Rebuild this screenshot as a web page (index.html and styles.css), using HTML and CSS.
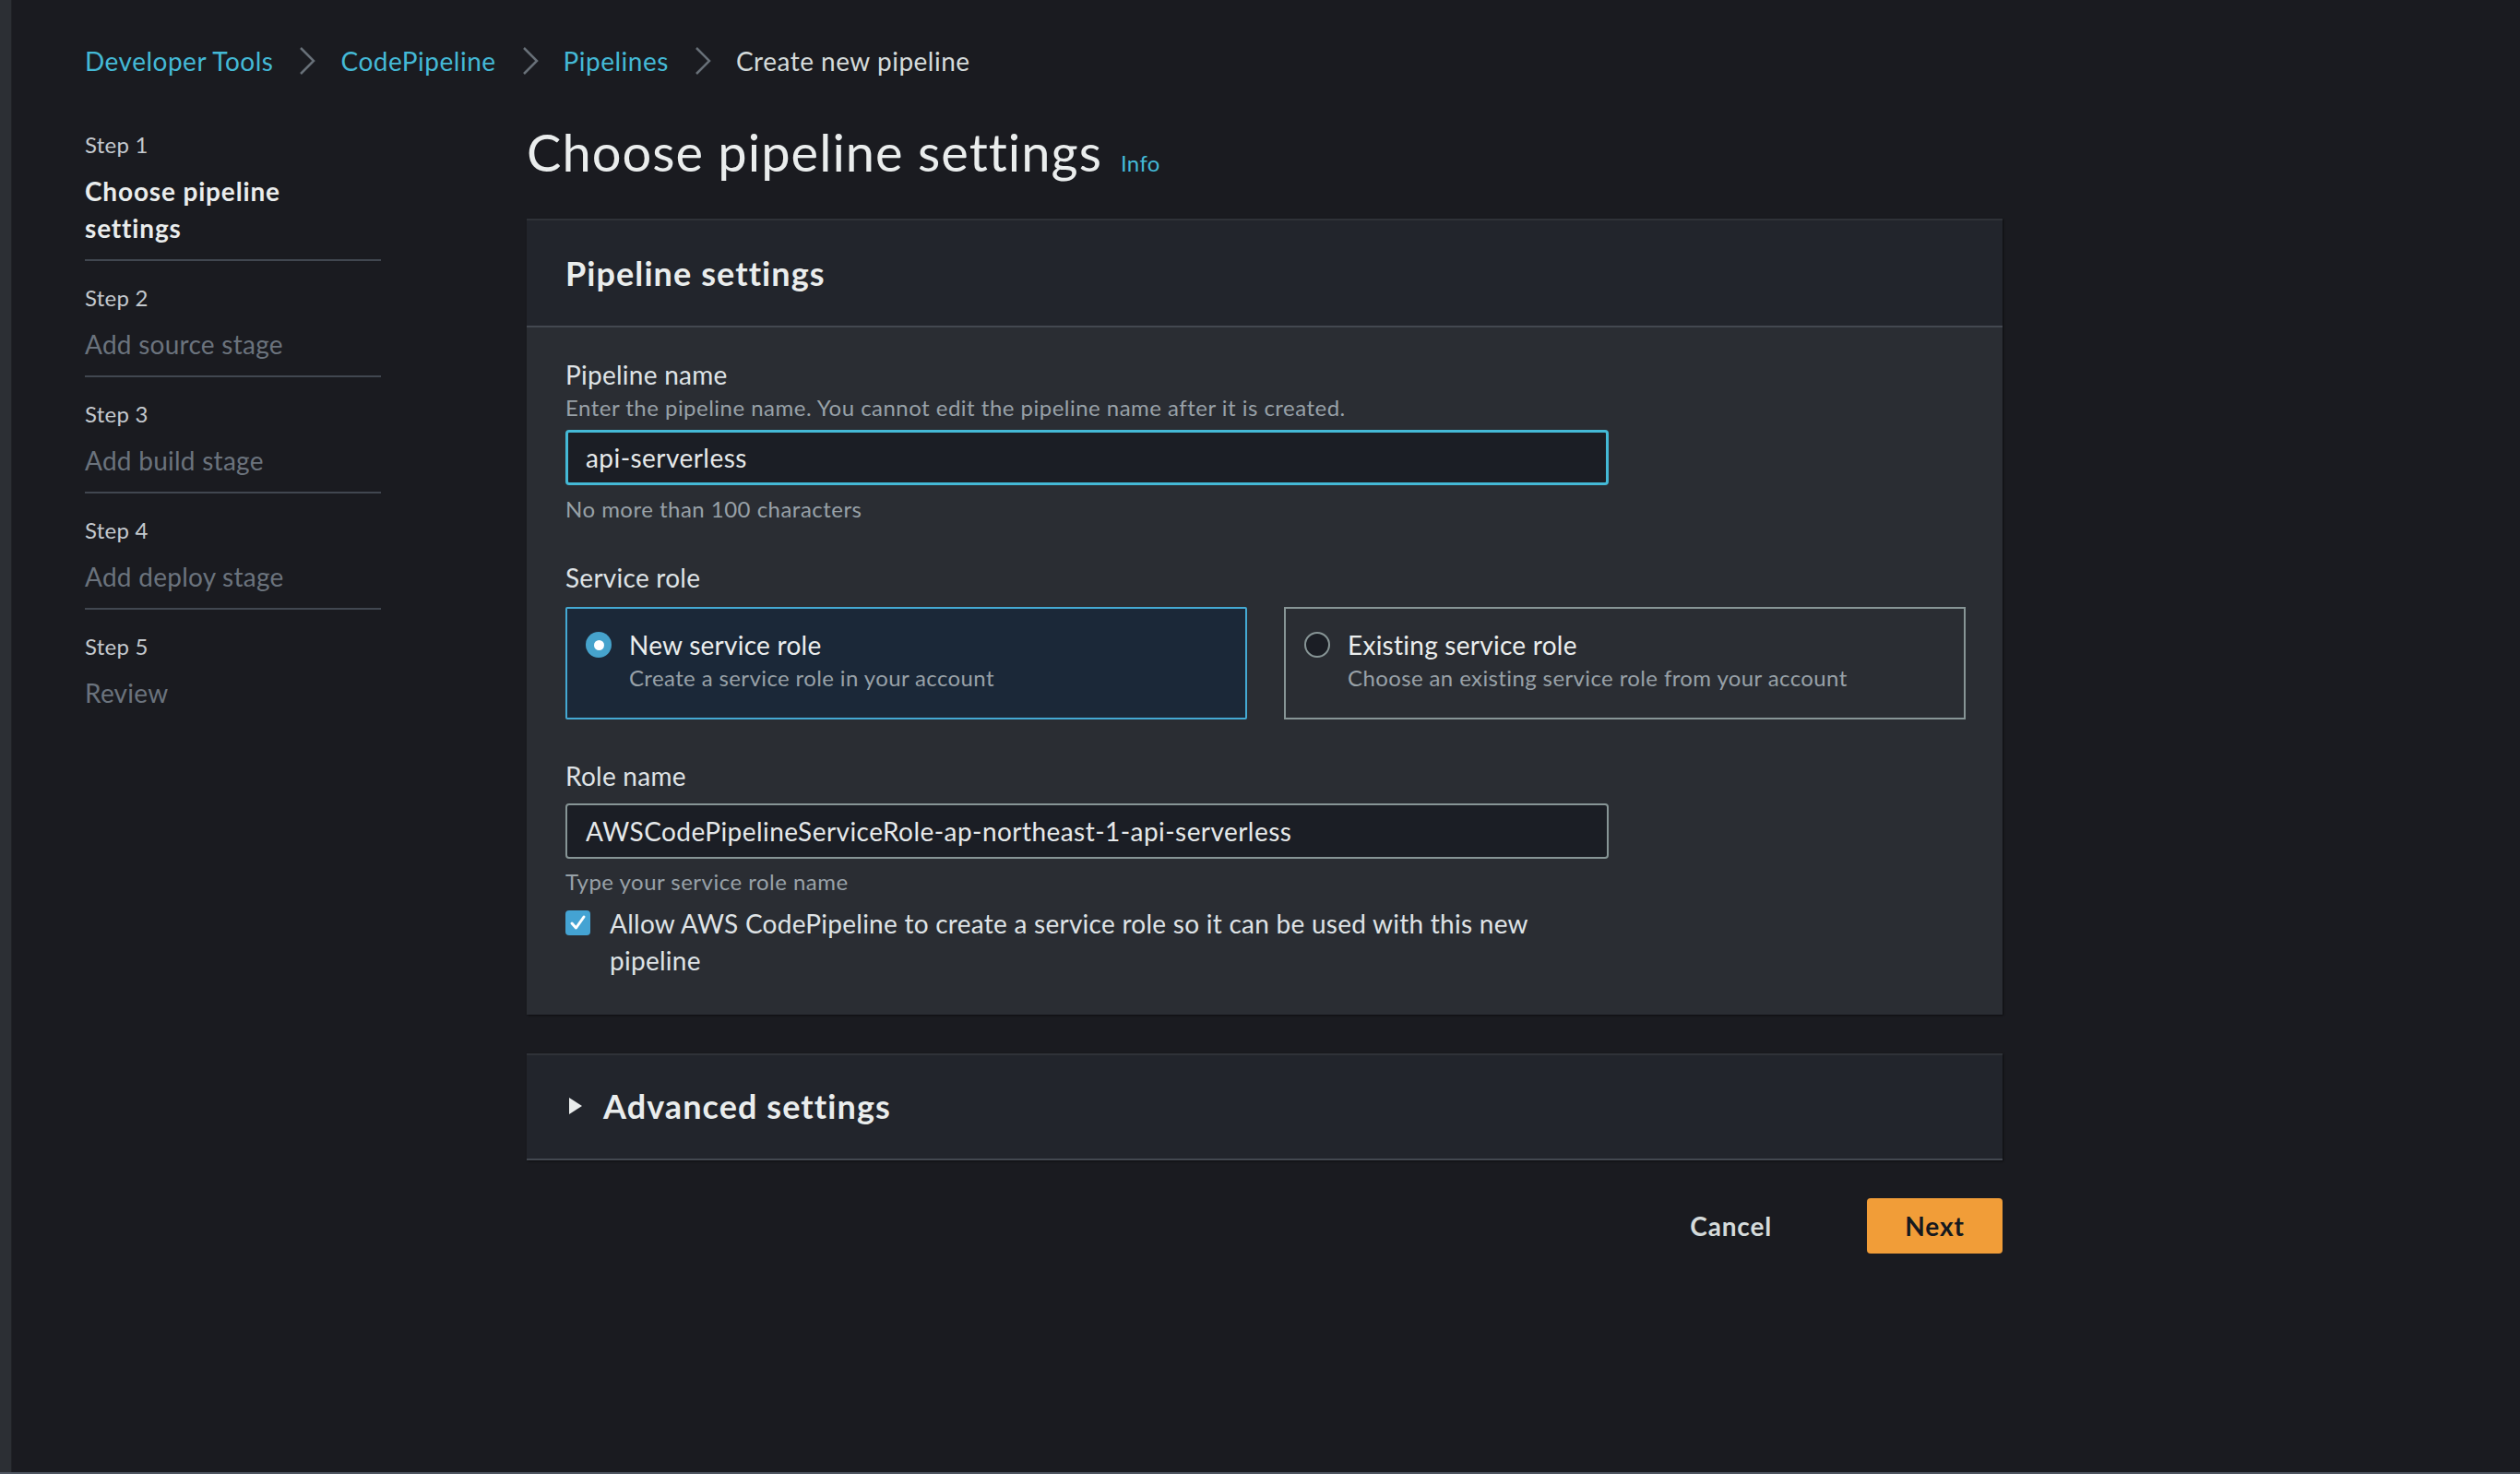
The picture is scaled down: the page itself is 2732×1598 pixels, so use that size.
FILE: index.html
```html
<!DOCTYPE html>
<html lang="en">
<head>
<meta charset="utf-8">
<title>Create new pipeline</title>
<link rel="stylesheet" href="styles.css">
</head>
<body>
<div class="app">
  <div class="shell">
    <div class="rail"></div>
    <div class="page">
      <nav class="breadcrumbs">
        <a class="crumb-link" href="#">Developer Tools</a>
        <svg class="crumb-sep" viewBox="0 0 20 32"><polyline points="3,2 17,16 3,30" fill="none" stroke="#687078" stroke-width="2.5"/></svg>
        <a class="crumb-link" href="#">CodePipeline</a>
        <svg class="crumb-sep" viewBox="0 0 20 32"><polyline points="3,2 17,16 3,30" fill="none" stroke="#687078" stroke-width="2.5"/></svg>
        <a class="crumb-link" href="#">Pipelines</a>
        <svg class="crumb-sep" viewBox="0 0 20 32"><polyline points="3,2 17,16 3,30" fill="none" stroke="#687078" stroke-width="2.5"/></svg>
        <span class="crumb-current">Create new pipeline</span>
      </nav>

      <div class="layout">
        <ol class="steps">
          <li class="step active"><span class="step-num">Step 1</span><span class="step-title">Choose pipeline settings</span></li>
          <li class="step"><span class="step-num">Step 2</span><span class="step-title">Add source stage</span></li>
          <li class="step"><span class="step-num">Step 3</span><span class="step-title">Add build stage</span></li>
          <li class="step"><span class="step-num">Step 4</span><span class="step-title">Add deploy stage</span></li>
          <li class="step"><span class="step-num">Step 5</span><span class="step-title">Review</span></li>
        </ol>

        <main class="content">
          <h1 class="title">Choose pipeline settings<a class="info" href="#">Info</a></h1>

          <section class="panel">
            <header class="panel-head"><h2>Pipeline settings</h2></header>
            <div class="panel-body">
              <div class="field">
                <div class="label">Pipeline name</div>
                <div class="desc">Enter the pipeline name. You cannot edit the pipeline name after it is created.</div>
                <input class="input focused" type="text" value="api-serverless">
                <div class="desc hint">No more than 100 characters</div>
              </div>

              <div class="field field-role">
                <div class="label">Service role</div>
                <div class="tiles">
                  <div class="tile selected">
                    <span class="radio on"></span>
                    <div class="tile-text">
                      <div class="tile-title">New service role</div>
                      <div class="tile-desc">Create a service role in your account</div>
                    </div>
                  </div>
                  <div class="tile">
                    <span class="radio off"></span>
                    <div class="tile-text">
                      <div class="tile-title">Existing service role</div>
                      <div class="tile-desc">Choose an existing service role from your account</div>
                    </div>
                  </div>
                </div>
              </div>

              <div class="field field-rolename">
                <div class="label">Role name</div>
                <input class="input role-input" type="text" value="AWSCodePipelineServiceRole-ap-northeast-1-api-serverless">
                <div class="desc hint-tight">Type your service role name</div>
                <div class="check-row">
                  <span class="checkbox"><svg viewBox="0 0 27 27" width="27" height="27"><polyline points="7,14 11.5,19 20,7" fill="none" stroke="#ffffff" stroke-width="3" stroke-linecap="round" stroke-linejoin="round"/></svg></span>
                  <span class="check-label">Allow AWS CodePipeline to create a service role so it can be used with this new pipeline</span>
                </div>
              </div>
            </div>
          </section>

          <section class="panel panel-collapsed">
            <div class="expander">
              <svg class="caret" viewBox="0 0 26 28" width="26" height="28"><polygon points="4,5 18,14 4,23" fill="#eaeded"/></svg>
              <h2>Advanced settings</h2>
            </div>
          </section>

          <div class="actions">
            <button class="btn btn-link" type="button">Cancel</button>
            <button class="btn btn-primary" type="button">Next</button>
          </div>
        </main>
      </div>
    </div>
  </div>
  <div class="bottom-line"></div>
</div>
</body>
</html>
```

FILE: styles.css
```css
* { box-sizing: border-box; }
html, body { margin: 0; height: 100%; }
body {
  background: #1a1b20;
  font-family: Lato, "Liberation Sans", sans-serif;
  letter-spacing: 0.016em;
  color: #d5dbdb;
  overflow: hidden;
}
.app { height: 100vh; display: flex; flex-direction: column; }
.shell { flex: 1; display: flex; min-height: 0; }
.rail { width: 13px; background: #2c2f34; border-right: 1px solid #202226; flex: none; }
.page { flex: 1; padding: 46px 0 0 79px; }
.bottom-line { height: 2px; background: #4f5661; flex: none; }

/* breadcrumbs */
.breadcrumbs { display: flex; align-items: center; height: 40px; font-size: 28px; line-height: 40px; letter-spacing: 0.018em; }
.crumb-link { color: #44b9d6; text-decoration: none; }
.crumb-current { color: #d5dbdb; }
.crumb-sep { width: 20px; height: 32px; margin: 0 26px 0 27px; flex: none; }

/* layout */
.layout { display: grid; grid-template-columns: 321px 1600px; column-gap: 158px; margin-top: 43px; align-items: start; }

/* steps nav */
.steps { list-style: none; margin: 12px 0 0; padding: 0; }
.step { padding: 24px 0 14px; border-bottom: 2px solid #414750; display: flex; flex-direction: column; gap: 14px; }
.step:first-child { padding-top: 0; }
.step:last-child { border-bottom: none; }
.step-num { font-size: 24px; line-height: 32px; color: #c4c9ce; }
.step-title { font-size: 28px; line-height: 40px; color: #6b737d; }
.step.active .step-title { color: #eaeded; font-weight: 700; letter-spacing: 0.03em; max-width: 260px; }

/* title */
.title { margin: 0; font-size: 56px; line-height: 72px; font-weight: 400; color: #eaeded; letter-spacing: 0.018em; }
.info { font-size: 24px; line-height: 1; color: #44b9d6; margin-left: 20px; text-decoration: none; letter-spacing: 0.016em; }

/* panels */
.panel {
  background: #2a2d33;
  border-top: 2px solid #2f3238;
  box-shadow: 1px 1px 2px rgba(0, 0, 0, 0.5);
  margin-top: 36px;
}
.panel-head { background: #22252c; padding: 35px 40px 35px 42px; border-bottom: 2px solid #434850; }
.panel h2 { margin: 0; font-size: 36px; line-height: 44px; font-weight: 700; color: #eaeded; letter-spacing: 0.03em; }
.panel-body { padding: 31px 40px 39px 42px; }

/* fields */
.label { font-size: 28px; line-height: 40px; color: #dfe3e6; }
.desc { font-size: 24px; line-height: 32px; color: #98a1a8; letter-spacing: 0.02em; }
.input {
  display: block;
  width: 1131px;
  height: 60px;
  margin-top: 8px;
  background: #1b1e25;
  border: 2px solid #879596;
  border-radius: 4px;
  padding: 0 20px;
  font-family: inherit;
  font-size: 28px;
  letter-spacing: 0.016em;
  color: #e6e9ea;
  outline: none;
}
.input.focused { border: 3px solid #44b9d6; padding-left: 19px; }
.hint { margin-top: 10px; }
.hint-tight { margin-top: 9px; }

.field-role { margin-top: 38px; }
.field-rolename { margin-top: 41px; }
.role-input { margin-top: 10px; }

/* tiles */
.tiles { display: grid; grid-template-columns: 1fr 1fr; gap: 40px; margin-top: 12px; }
.tile { border: 2px solid #879596; padding: 19px 20px 27px; display: flex; gap: 19px; align-items: flex-start; }
.tile.selected { border-color: #44a9d3; background: #1b2838; border-radius: 2px; }
.radio { width: 28px; height: 28px; border-radius: 50%; margin-top: 6px; flex: none; }
.radio.on { background: #46a3cc; display: flex; align-items: center; justify-content: center; }
.radio.on::after { content: ""; width: 11px; height: 11px; background: #ffffff; border-radius: 50%; }
.radio.off { border: 2px solid #879596; background: #1b1e25; }
.tile-title { font-size: 28px; line-height: 40px; color: #eaeded; }
.tile-desc { font-size: 24px; line-height: 32px; color: #98a1a8; letter-spacing: 0.016em; }

/* checkbox */
.check-row { display: flex; gap: 21px; margin-top: 9px; }
.checkbox { width: 27px; height: 27px; background: #44a3d3; border-radius: 4px; margin-top: 6px; flex: none; display: block; }
.checkbox svg { display: block; }
.check-label { font-size: 28px; line-height: 40px; color: #dfe3e6; max-width: 1040px; }

/* collapsed panel */
.panel-collapsed { background: #22252c; margin-top: 42px; border-bottom: 2px solid #434850; padding: 33px 40px 35px 42px; }
.expander { display: flex; align-items: center; }
.caret { margin-right: 15px; flex: none; }

/* actions */
.actions { display: flex; justify-content: flex-end; gap: 63px; margin-top: 41px; }
.btn {
  height: 60px;
  padding: 0 40px;
  font-family: inherit;
  font-size: 28px;
  font-weight: 700;
  letter-spacing: 0.03em;
  border-radius: 4px;
  border: none;
  display: flex;
  align-items: center;
}
.btn-primary { background: #f19d38; color: #16191f; width: 147px; justify-content: center; }
.btn-link { background: transparent; color: #d5dbdb; }
```
